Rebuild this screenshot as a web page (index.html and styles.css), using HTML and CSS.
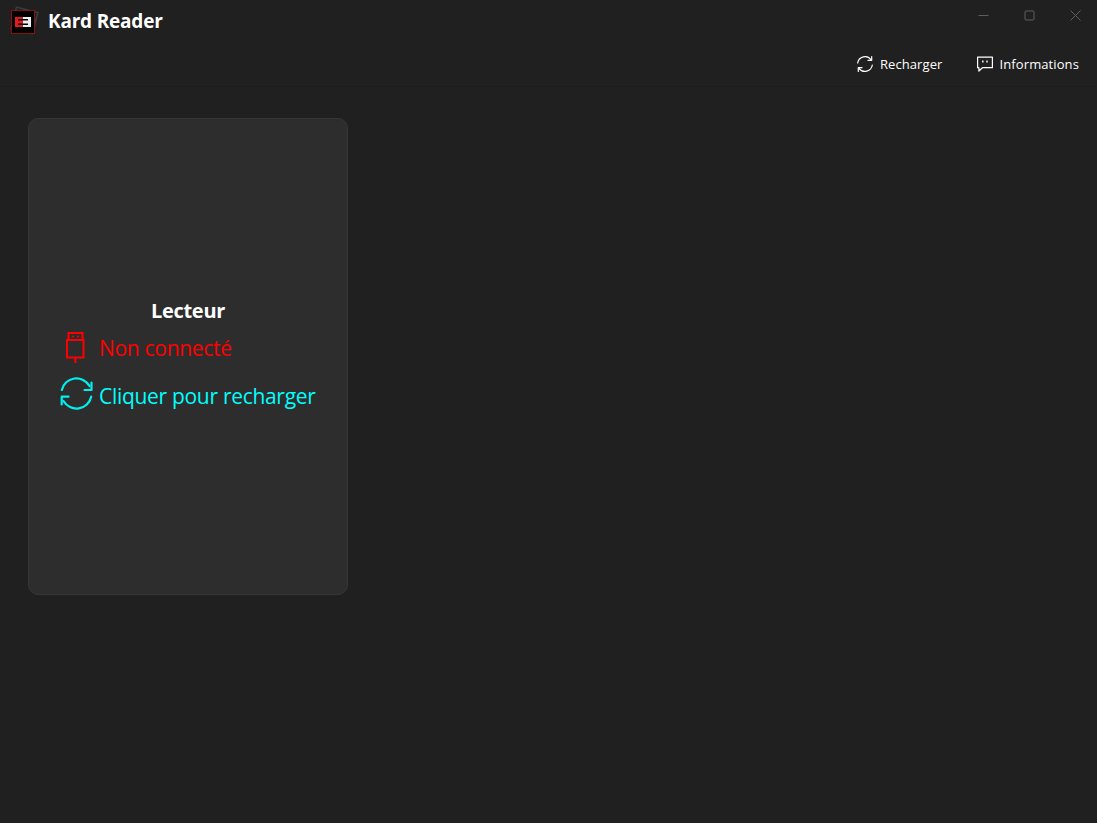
FILE: index.html
```html
<!DOCTYPE html>
<html lang="fr">
<head>
<meta charset="utf-8">
<title>Kard Reader</title>
<link rel="stylesheet" href="styles.css">
</head>
<body>
<header class="header">
  <div class="titlebar">
    <div class="brand">
      <svg class="logo" width="32" height="30" viewBox="0 0 32 30">
        <rect x="5.500" y="3.500" width="22" height="22" fill="none" stroke="#3a3d3f" stroke-width="1.500" transform="rotate(14 16.500 14.500)"/>
        <rect x="3.500" y="4.500" width="23" height="23" fill="#000" stroke="#8a0f14"/>
        <rect x="7" y="11" width="8" height="10" fill="#e21a1f"/>
        <rect x="10" y="13" width="5" height="1.500" fill="#000"/>
        <rect x="10" y="17.500" width="5" height="1.500" fill="#000"/>
        <rect x="15" y="11" width="8" height="10" fill="#eee"/>
        <rect x="15" y="13" width="5" height="1.500" fill="#000"/>
        <rect x="15" y="17.500" width="5" height="1.500" fill="#000"/>
      </svg>
      <span class="app-name">Kard Reader</span>
    </div>
    <div class="window-controls">
      <svg class="win-icon" width="11" height="11" viewBox="0 0 11 11"><path d="M0.500 5.500H10.500"/></svg>
      <svg class="win-icon" width="11" height="11" viewBox="0 0 11 11"><rect x="1" y="1" width="9" height="9" rx="1"/></svg>
      <svg class="win-icon" width="11" height="11" viewBox="0 0 11 11"><path d="M0.500 0.500L10.500 10.500M10.500 0.500L0.500 10.500"/></svg>
    </div>
  </div>
  <nav class="commands">
    <button class="command">
      <svg width="18" height="18" viewBox="0 0 18 18" fill="none" stroke="#fff" stroke-width="1.200" stroke-linecap="round" stroke-linejoin="round">
        <path d="M1.700 8A7.400 7.400 0 0 1 15 4.700"/>
        <path d="M15.700 1.500V5.300H12"/>
        <path d="M16.300 10A7.400 7.400 0 0 1 3 13.300"/>
        <path d="M2.300 16.500V12.700H6"/>
      </svg>
      <span>Recharger</span>
    </button>
    <button class="command">
      <svg width="18" height="18" viewBox="0 0 18 18" fill="none" stroke="#fff" stroke-width="1.200" stroke-linejoin="round">
        <path d="M1.600 2.100H16.400V12.700H6.500L2.900 16V12.700H1.600Z"/>
        <path d="M6.800 5.600V7.400M11 5.600V7.400" stroke-width="1.400"/>
      </svg>
      <span>Informations</span>
    </button>
  </nav>
</header>
<main class="content">
  <section class="card">
    <h2 class="card-title">Lecteur</h2>
    <div class="status status-error">
      <svg class="status-icon" width="34" height="34" viewBox="0 0 34 34" fill="none" stroke="#f00" stroke-width="2">
        <path d="M9.500 9V2H23.500V9"/>
        <rect x="8" y="9" width="16.500" height="17.500"/>
        <path d="M16.300 26.500V32"/>
        <path d="M13 5.500H15M18 5.500H20" stroke-width="1.500"/>
      </svg>
      <span>Non connecté</span>
    </div>
    <button class="status status-action">
      <svg class="status-icon" width="34" height="34" viewBox="0 0 34 34" fill="none" stroke="#00f0f0" stroke-width="2.200" stroke-linecap="round" stroke-linejoin="round">
        <path d="M2.800 14A15 15 0 0 1 30.500 10"/>
        <path d="M32.500 6.500V14H25.500"/>
        <path d="M32.200 20.700A15 15 0 0 1 4.500 25"/>
        <path d="M2.700 28.500V20.700H9.500"/>
      </svg>
      <span>Cliquer pour recharger</span>
    </button>
  </section>
</main>
</body>
</html>
```
FILE: styles.css
```css
* {
  box-sizing: border-box;
}

html,
body {
  height: 100%;
}

body {
  margin: 0;
  background: #202020;
  color: #fff;
  font-family: "Open Sans", "Noto Sans", sans-serif;
  overflow: hidden;
}

.header {
  height: 87px;
  border-bottom: 1px solid #1c1c1c;
  display: flex;
  flex-direction: column;
}

.titlebar {
  height: 42px;
  display: flex;
  justify-content: space-between;
  align-items: flex-start;
}

.brand {
  display: flex;
  align-items: center;
  height: 42px;
  padding-left: 8px;
  gap: 8px;
}

.logo {
  flex: none;
}

.app-name {
  font-size: 19px;
  font-weight: 700;
  letter-spacing: -0.2px;
}

.window-controls {
  display: flex;
  gap: 35px;
  padding: 10px 16px 0 0;
}

.win-icon {
  fill: none;
  stroke: #5d5f5f;
  stroke-width: 1;
}

.commands {
  flex: 1;
  display: flex;
  justify-content: flex-end;
  align-items: center;
  gap: 33px;
  padding: 0 18px 0 0;
}

.command {
  display: flex;
  align-items: center;
  gap: 6px;
  padding: 0;
  border: 0;
  background: none;
  color: #fff;
  font: inherit;
  font-size: 13px;
  letter-spacing: 0.1px;
}

.content {
  padding: 31px 28px;
}

.card {
  width: 320px;
  height: 477px;
  display: flex;
  flex-direction: column;
  justify-content: center;
  align-items: center;
  background: #2d2d2d;
  border: 1px solid #363636;
  border-radius: 10px;
}

.card-title {
  margin: 0;
  font-size: 20px;
  font-weight: 700;
  line-height: 26px;
  letter-spacing: -0.3px;
}

.status {
  width: 100%;
  display: flex;
  align-items: center;
  padding: 0 0 0 30px;
  border: 0;
  background: none;
  font: inherit;
  font-size: 21px;
  letter-spacing: -0.3px;
  line-height: 34px;
}

.status-error {
  color: #f00;
  margin-top: 7px;
}

.status-error .status-icon {
  margin-right: 6px;
}

.status-action {
  color: #0ff;
  margin-top: 11px;
}

.status-action .status-icon {
  margin: 0 6px 6px 0;
}

.status-icon {
  flex: none;
}
```
